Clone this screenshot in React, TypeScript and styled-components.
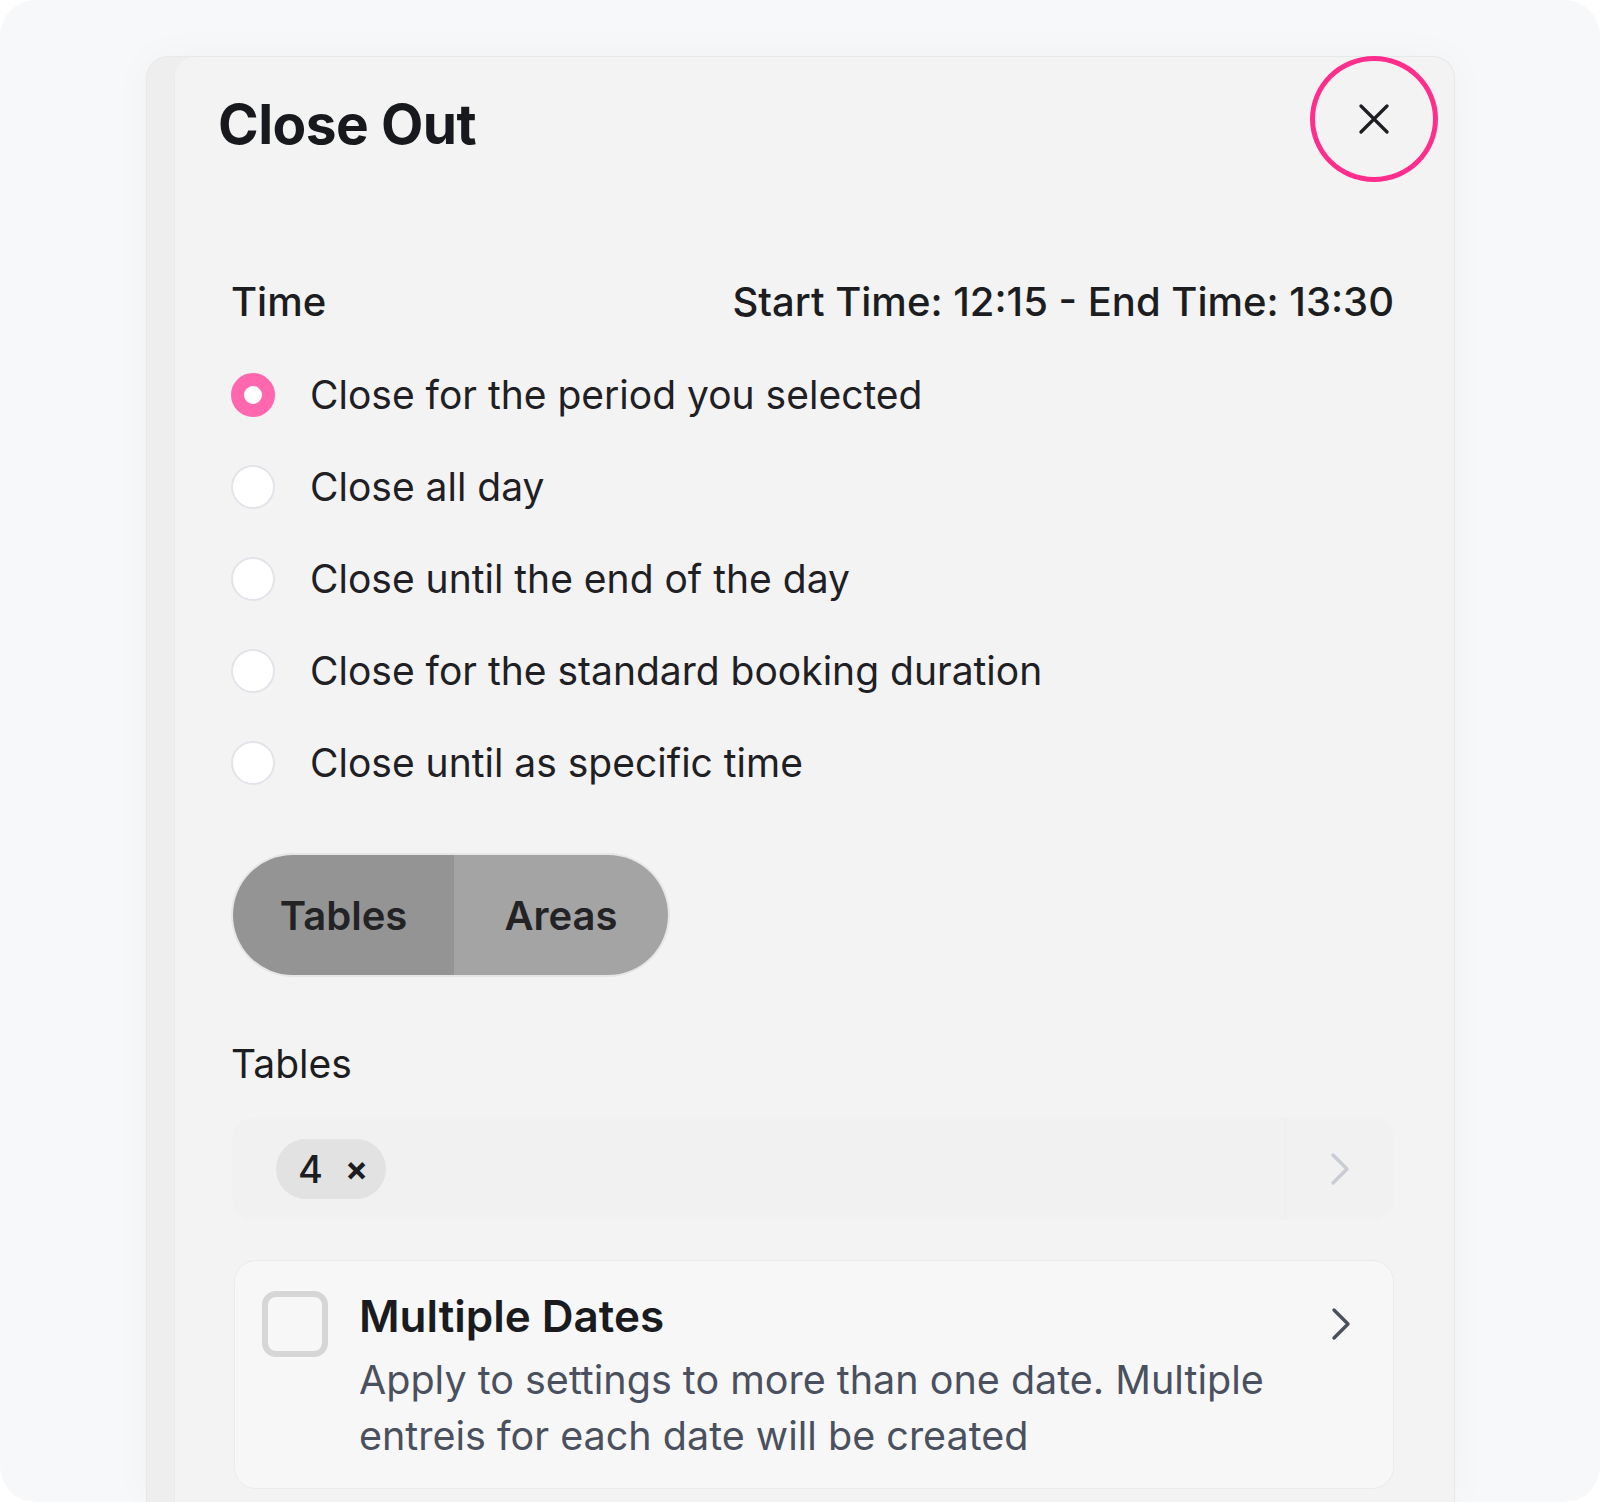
import styled, {createGlobalStyle} from 'styled-components'

const options = [
  'Close for the period you selected',
  'Close all day',
  'Close until the end of the day',
  'Close for the standard booking duration',
  'Close until as specific time',
]

export default function App() {
  return (
    <>
      <GlobalStyle />
      <Frame>
        <Panel>
          <Sheet>
            <Header>
              <Title>Close Out</Title>
              <CloseRing aria-label="Close">
                <svg width="30" height="30" viewBox="0 0 30 30">
                  <path d="M2 2 L28 28 M28 2 L2 28" stroke="#1d1e22" strokeWidth="3.2" strokeLinecap="round" />
                </svg>
              </CloseRing>
            </Header>
            <Body>
              <TimeRow>
                <span>Time</span>
                <span>Start Time: 12:15 - End Time: 13:30</span>
              </TimeRow>
              <OptionList>
                {options.map((label, i) => (
                  <OptionRow key={label}>
                    <Radio $checked={i === 0} />
                    <OptionText>{label}</OptionText>
                  </OptionRow>
                ))}
              </OptionList>
              <Segmented>
                <Segment $active>Tables</Segment>
                <Segment>Areas</Segment>
              </Segmented>
              <FieldLabel>Tables</FieldLabel>
              <ChipField>
                <ChipArea>
                  <Chip>
                    4
                    <ChipRemove>×</ChipRemove>
                  </Chip>
                </ChipArea>
                <ChipArrow>
                  <Chevron color="#c9ccd3" />
                </ChipArrow>
              </ChipField>
              <DatesCard>
                <Checkbox />
                <DatesText>
                  <DatesTitle>Multiple Dates</DatesTitle>
                  <DatesDesc>
                    Apply to settings to more than one date. Multiple entreis for each date will be created
                  </DatesDesc>
                </DatesText>
                <DatesArrow>
                  <Chevron color="#4a505e" />
                </DatesArrow>
              </DatesCard>
            </Body>
          </Sheet>
        </Panel>
      </Frame>
    </>
  )
}

function Chevron({color}: {color: string}) {
  return (
    <svg width="24" height="34" viewBox="0 0 24 34">
      <path d="M5 3 L19 17 L5 31" fill="none" stroke={color} strokeWidth="3.4" strokeLinecap="round" strokeLinejoin="round" />
    </svg>
  )
}

const GlobalStyle = createGlobalStyle`
  html, body {
    margin: 0;
    background: #ffffff;
  }
  body {
    font-family: Inter, "Liberation Sans", sans-serif;
    color: #1c1d21;
  }
`

const Frame = styled.div`
  height: 1502px;
  box-sizing: border-box;
  background: #f7f8fa;
  border-radius: 36px;
  padding: 56px 145px 0 146px;
  overflow: hidden;
`

const Panel = styled.div`
  height: 100%;
  display: flex;
  background: #eeeeef;
  border: 1px solid #e7e8ea;
  border-bottom: none;
  border-radius: 22px 22px 0 0;
  box-shadow: 0 0 40px rgba(0, 0, 0, 0.03);
`

const Sheet = styled.div`
  flex: 1;
  margin-left: 27px;
  background: #f3f3f3;
  border-radius: 20px 22px 0 0;
  border-left: 1px solid #ebebec;
`

const Header = styled.div`
  position: relative;
  padding: 34px 0 0 43px;
`

const Title = styled.h1`
  margin: 0;
  font-size: 55px;
  line-height: 67px;
  font-weight: 700;
  letter-spacing: -0.5px;
  color: #18191d;
`

const CloseRing = styled.button`
  position: absolute;
  top: -1px;
  right: 16px;
  width: 128px;
  height: 126px;
  box-sizing: border-box;
  border: 5px solid #ff2e8c;
  border-radius: 50%;
  background: transparent;
  display: flex;
  align-items: center;
  justify-content: center;
  padding: 0;
  cursor: pointer;
`

const Body = styled.div`
  padding: 120px 60px 0 56px;
  display: flex;
  flex-direction: column;
`

const TimeRow = styled.div`
  display: flex;
  justify-content: space-between;
  font-size: 40px;
  line-height: 48px;
  font-weight: 500;
  color: #1c1d21;
`

const OptionList = styled.div`
  margin-top: 23px;
  display: flex;
  flex-direction: column;
`

const OptionRow = styled.label`
  height: 92px;
  display: flex;
  align-items: center;
  gap: 35px;
`

const Radio = styled.span<{$checked?: boolean}>`
  width: 44px;
  height: 44px;
  box-sizing: border-box;
  border-radius: 50%;
  flex-shrink: 0;
  background: #ffffff;
  border: ${p => (p.$checked ? '13px solid #ff67ae' : '2px solid #e3e4e9')};
`

const OptionText = styled.span`
  font-size: 39px;
  line-height: 48px;
  color: #1f2024;
`

const Segmented = styled.div`
  margin-top: 46px;
  margin-left: 2px;
  width: 435px;
  height: 120px;
  display: flex;
  border-radius: 60px;
  overflow: hidden;
  box-shadow: 0 0 0 2px #e6e6e6;
`

const Segment = styled.div<{$active?: boolean}>`
  flex: ${p => (p.$active ? '0 0 221px' : '1')};
  box-sizing: border-box;
  display: flex;
  align-items: center;
  justify-content: center;
  background: ${p => (p.$active ? '#949494' : '#a4a4a4')};
  font-size: 40px;
  font-weight: 600;
  color: #232325;
`

const FieldLabel = styled.div`
  margin-top: 65px;
  font-size: 39px;
  line-height: 47px;
  color: #1c1d21;
`

const ChipField = styled.div`
  margin-top: 30px;
  height: 103px;
  display: flex;
  background: #f1f1f1;
  border-radius: 22px;
  margin-left: 1px;
`

const ChipArea = styled.div`
  flex: 1;
  display: flex;
  align-items: center;
  padding-left: 44px;
  border-right: 1px solid #ededed;
`

const Chip = styled.span`
  height: 60px;
  display: inline-flex;
  align-items: center;
  gap: 22px;
  padding: 0 18px 0 22px;
  border-radius: 30px;
  background: #e2e2e2;
  font-size: 38px;
  font-weight: 500;
  color: #1c1d21;
`

const ChipRemove = styled.span`
  font-size: 34px;
  font-weight: 700;
  line-height: 1;
`

const ChipArrow = styled.div`
  width: 108px;
  display: flex;
  align-items: center;
  justify-content: center;
`

const DatesCard = styled.div`
  margin-top: 40px;
  margin-left: 3px;
  display: flex;
  align-items: flex-start;
  padding: 30px 40px 24px 27px;
  background: #f7f7f7;
  border: 1.5px solid #ebebeb;
  border-radius: 22px;
`

const Checkbox = styled.span`
  width: 66px;
  height: 66px;
  flex-shrink: 0;
  box-sizing: border-box;
  border: 6px solid #d6d6d6;
  border-radius: 14px;
  background: #f7f7f7;
`

const DatesText = styled.div`
  flex: 1;
  margin-left: 31px;
`

const DatesTitle = styled.div`
  font-size: 44px;
  line-height: 47px;
  font-weight: 600;
  color: #1a1b1f;
  margin-top: 2px;
`

const DatesDesc = styled.div`
  margin-top: 12px;
  font-size: 39.5px;
  line-height: 56px;
  color: #4a505e;
  max-width: 920px;
`

const DatesArrow = styled.div`
  margin-top: 16px;
  margin-left: 20px;
`
